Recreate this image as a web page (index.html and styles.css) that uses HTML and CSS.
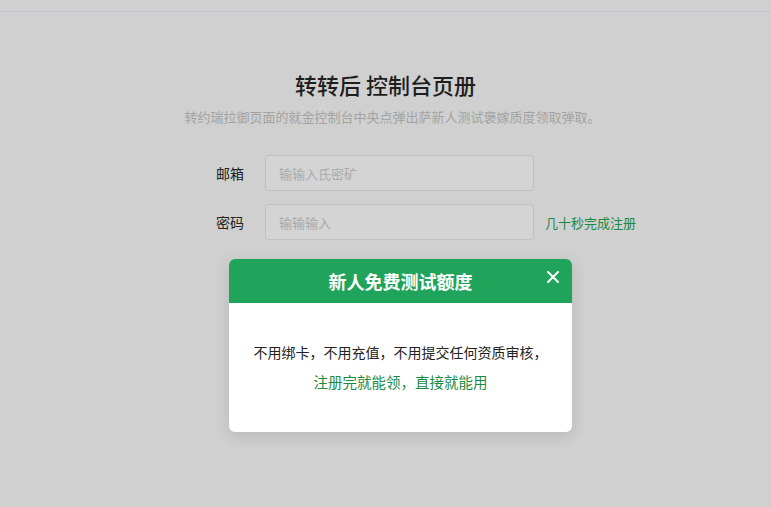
FILE: index.html
```html
<!DOCTYPE html>
<html lang="zh-CN">
  <head>
    <meta charset="UTF-8" />
    <meta name="viewport" content="width=device-width, initial-scale=1.0" />
    <title>控制台页册</title>
    <link rel="stylesheet" href="styles.css">
  </head>
  <body>
    <div class="topbar"></div>
    <div class="page">
      <h1 class="title">转转后 控制台页册</h1>
      <p class="subtitle">转约瑞拉御页面的就金控制台中央点弹出萨新人测试褒嫁质度领取弹取。</p>
      <form class="form">
        <div class="form-row">
          <label for="email">邮箱</label>
          <input class="form-control" id="email" type="text" placeholder="输输入氏密矿" />
        </div>
        <div class="form-row">
          <label for="password">密码</label>
          <input class="form-control" id="password" type="text" placeholder="输输输入" />
          <a class="link" href="#">几十秒完成注册</a>
        </div>
      </form>
    </div>

    <div class="modal">
      <div class="modal-header">
        <div class="modal-title">新人免费测试额度</div>
        <button class="close" type="button">
          <svg width="12" height="12" viewBox="0 0 12 12">
            <path d="M1 1L11 11M11 1L1 11" stroke="#fff" stroke-width="2" stroke-linecap="round" />
          </svg>
        </button>
      </div>
      <div class="modal-body">
        <p>不用绑卡，不用充值，不用提交任何资质审核，</p>
        <p class="green">注册完就能领，直接就能用</p>
      </div>
    </div>
  </body>
</html>
```

FILE: styles.css
```css
body {
  margin: 0;
  height: 507px;
  background-color: #cfd0cf;
  font-family: "Noto Sans CJK SC", "Noto Sans", sans-serif;
  color: #222;
  overflow: hidden;
}

.topbar {
  height: 11px;
  border-bottom: 1px solid #c2c6c8;
}

.page {
  padding-top: 57px;
  text-align: center;
}

.title {
  margin: 0;
  font-size: 22px;
  line-height: 30px;
  font-weight: 500;
  color: #1e1e1e;
}

.subtitle {
  margin: 8px 0 0;
  padding-left: 14px;
  font-size: 13px;
  line-height: 20px;
  color: #a2a4a3;
}

.form {
  width: 421px;
  margin: 28px 0 0 216px;
  text-align: left;
}

.form-row {
  display: flex;
  align-items: center;
  height: 36px;
  margin-bottom: 13px;
}

.form-row label {
  width: 28px;
  margin-right: 21px;
  font-size: 14px;
  color: #222;
}

.form-control {
  box-sizing: border-box;
  width: 269px;
  height: 36px;
  padding: 0 13px;
  font-family: inherit;
  font-size: 13px;
  background-color: #d3d4d3;
  border: 1px solid #bfc1c0;
  border-radius: 4px;
  outline: none;
}

.form-control::placeholder {
  color: #a9abaa;
}

.link {
  margin-left: 11px;
  font-size: 13px;
  color: #1b8a45;
  text-decoration: none;
}

.modal {
  position: absolute;
  left: 229px;
  top: 259px;
  width: 343px;
  height: 173px;
  background-color: #fff;
  border-radius: 6px;
  overflow: hidden;
  box-shadow: 0 4px 16px rgba(0, 0, 0, 0.12);
}

.modal-header {
  position: relative;
  height: 44px;
  background-color: #20a35a;
  display: flex;
  align-items: center;
  justify-content: center;
}

.modal-title {
  font-size: 18px;
  font-weight: 700;
  color: #fff;
}

.close {
  position: absolute;
  right: 13px;
  top: 12px;
  padding: 0;
  border: none;
  background: none;
  cursor: pointer;
}

.modal-body {
  padding-top: 34px;
  text-align: center;
}

.modal-body p {
  margin: 0;
  font-size: 14px;
  line-height: 30px;
  color: #222;
}

.modal-body .green {
  font-size: 14.5px;
  color: #1b8a45;
}
```
